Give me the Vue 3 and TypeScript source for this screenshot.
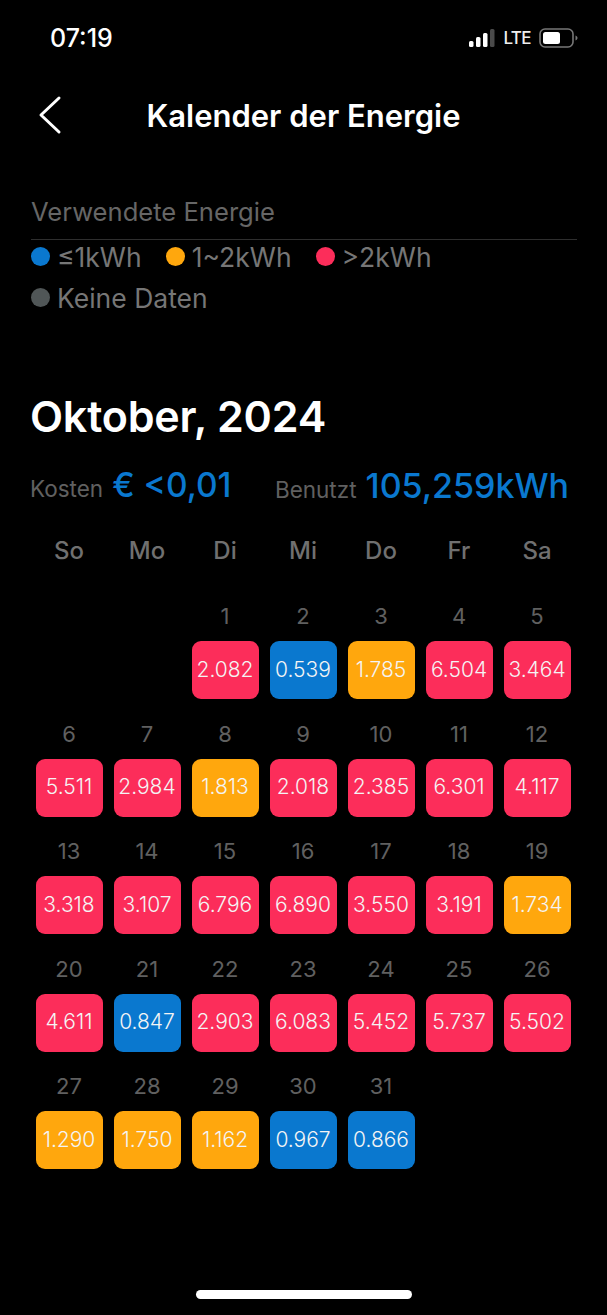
<script setup lang="ts">
type Level = 'low' | 'mid' | 'high'

const weekdays = ['So', 'Mo', 'Di', 'Mi', 'Do', 'Fr', 'Sa']

const values = [
  2.082, 0.539, 1.785, 6.504, 3.464, 5.511, 2.984, 1.813, 2.018, 2.385, 6.301, 4.117,
  3.318, 3.107, 6.796, 6.89, 3.55, 3.191, 1.734, 4.611, 0.847, 2.903, 6.083, 5.452,
  5.737, 5.502, 1.29, 1.75, 1.162, 0.967, 0.866,
]

const levelOf = (v: number): Level => {
  if (v <= 1) return 'low'
  if (v <= 2) return 'mid'
  return 'high'
}

const days = values.map((v, i) => ({ day: i + 1, text: v.toFixed(3), level: levelOf(v) }))
</script>

<template>
  <div class="page">
    <div class="status">
      <span class="time">07:19</span>
      <div class="status-right">
        <svg width="26" height="18" viewBox="0 0 26 18" class="signal">
          <rect x="0" y="12" width="4.500" height="6" rx="1.500" fill="#fff" />
          <rect x="7" y="8" width="4.500" height="10" rx="1.500" fill="#fff" />
          <rect x="14" y="4" width="4.500" height="14" rx="1.500" fill="#fff" />
          <rect x="21" y="0" width="4.500" height="18" rx="1.500" fill="#4a4a4a" />
        </svg>
        <span class="lte">LTE</span>
        <svg width="39" height="20" viewBox="0 0 39 20">
          <rect x="1" y="1" width="33" height="18" rx="5" fill="none" stroke="#777" stroke-width="1.6" />
          <rect x="4" y="4" width="17" height="12" rx="2.5" fill="#fff" />
          <path d="M36.5 7.5c1.2.4 2 1.300 2 2.500s-.8 2.100-2 2.500z" fill="#777" />
        </svg>
      </div>
    </div>

    <div class="nav">
      <svg class="back" width="24" height="40" viewBox="0 0 24 40">
        <path d="M21 3 3 20l18 17" fill="none" stroke="#fff" stroke-width="3" stroke-linecap="round" stroke-linejoin="round" />
      </svg>
      <h1 class="title">Kalender der Energie</h1>
    </div>

    <div class="legend-box">
      <div class="legend-title">Verwendete Energie</div>
      <div class="legend">
        <div class="legend-item"><i class="dot low"></i>≤1kWh</div>
        <div class="legend-item"><i class="dot mid"></i>1~2kWh</div>
        <div class="legend-item"><i class="dot high"></i>&gt;2kWh</div>
        <div class="legend-item"><i class="dot none"></i>Keine Daten</div>
      </div>
    </div>

    <h2 class="month">Oktober, 2024</h2>

    <div class="summary">
      <div class="sum-col">
        <span class="sum-label">Kosten</span>
        <span class="sum-value">€ &lt;0,01</span>
      </div>
      <div class="sum-col">
        <span class="sum-label">Benutzt</span>
        <span class="sum-value wide">105,259kWh</span>
      </div>
    </div>

    <div class="weekdays">
      <span v-for="w in weekdays" :key="w">{{ w }}</span>
    </div>

    <div class="grid">
      <div class="cell blank"></div>
      <div class="cell blank"></div>
      <div v-for="d in days" :key="d.day" class="cell">
        <span class="num">{{ d.day }}</span>
        <div class="tile" :class="d.level">{{ d.text }}</div>
      </div>
    </div>

    <div class="home"></div>
  </div>
</template>

<style scoped>
.page {
  width: 607px;
  height: 1315px;
  background: #000;
  color: #fff;
  font-family: Inter, "Liberation Sans", sans-serif;
  display: flex;
  flex-direction: column;
  overflow: hidden;
}

.status {
  height: 30px;
  margin-top: 23px;
  padding: 0 29px 0 50px;
  display: flex;
  align-items: center;
  justify-content: space-between;
}

.time {
  font-size: 25px;
  font-weight: 500;
}

.status-right {
  display: flex;
  align-items: center;
  gap: 8px;
}

.lte {
  font-size: 17px;
  font-weight: 500;
  letter-spacing: -0.6px;
  color: #eee;
}

.nav {
  position: relative;
  height: 60px;
  margin-top: 33px;
  display: flex;
  align-items: center;
  justify-content: center;
}

.back {
  position: absolute;
  left: 38px;
  top: 9px;
}

.title {
  margin: 0;
  font-size: 31px;
  font-weight: 600;
  line-height: 58px;
}

.legend-box {
  margin: 44px 30px 0 31px;
}

.legend-title {
  height: 49px;
  line-height: 44px;
  font-size: 25.6px;
  color: #666;
  border-bottom: 1px solid #2e2e2e;
}

.legend {
  display: flex;
  flex-wrap: wrap;
  column-gap: 24px;
  width: 470px;
  margin-top: -4px;
}

.legend-item {
  height: 41px;
  display: flex;
  align-items: center;
  gap: 7px;
  font-size: 26.5px;
  color: #767676;
}

.dot {
  width: 19px;
  height: 19px;
  border-radius: 50%;
}

.dot.low { background: #0a78cf; }
.dot.mid { background: #ffa70d; }
.dot.high { background: #fc2d5a; }
.dot.none { background: #505657; }

.month {
  margin: 72px 0 0 30px;
  font-size: 43px;
  line-height: 52px;
  font-weight: 600;
  letter-spacing: -0.2px;
}

.summary {
  margin-top: 21px;
  padding: 0 38px 0 30px;
  height: 44px;
  display: flex;
  justify-content: space-between;
  align-items: center;
}

.sum-col {
  display: flex;
  align-items: baseline;
  gap: 9px;
}

.sum-label {
  font-size: 22.5px;
  color: #606060;
}

.sum-value {
  font-size: 33.5px;
  font-weight: 500;
  color: #0a78cf;
}

.sum-value.wide {
  font-size: 34px;
}

.weekdays {
  margin-top: 24px;
  padding: 0 30px;
  display: grid;
  grid-template-columns: repeat(7, 78px);
  height: 40px;
  line-height: 40px;
  text-align: center;
  font-size: 24px;
  font-weight: 500;
  color: #707070;
}

.grid {
  margin-top: 30px;
  padding: 0 30px;
  display: grid;
  grid-template-columns: repeat(7, 78px);
  row-gap: 19.5px;
}

.cell {
  display: flex;
  flex-direction: column;
  align-items: center;
  gap: 10px;
}

.num {
  height: 30px;
  line-height: 30px;
  font-size: 22px;
  color: #606060;
}

.tile {
  width: 67px;
  height: 58px;
  padding-bottom: 2px;
  box-sizing: border-box;
  border-radius: 9px;
  display: flex;
  align-items: center;
  justify-content: center;
  font-size: 21px;
  font-weight: 300;
  color: #f4f4f4;
}

.tile.low { background: #0a78cf; }
.tile.mid { background: #ffa70d; }
.tile.high { background: #fc2d5a; }

.home {
  width: 216px;
  height: 9px;
  border-radius: 5px;
  background: #fff;
  margin: auto auto 16px;
}
</style>

<style>
body {
  background: #000;
}
</style>
